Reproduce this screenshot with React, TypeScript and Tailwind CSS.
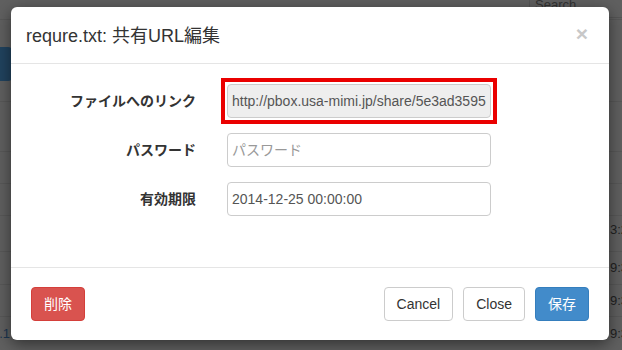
import { useState } from 'react'

const font = '"Liberation Sans", "Noto Sans CJK JP", Arial, sans-serif'

// Dimmed page that sits behind the modal
function BackdropPage() {
  return (
    <div className="flex h-full w-full flex-col bg-[#606060] text-[13px] text-[#222]">
      <div className="flex h-[20px] justify-end border-b border-[#585858]">
        <div className="mr-[-4px] mt-[-6px] h-[24px] w-[97px] rounded-[3px] border border-[#555] pl-[5px] text-[#333]">
          Search
        </div>
      </div>
      <div className="flex h-[82px] items-start border-b border-[#585858] pt-[27px]">
        <div className="h-[34px] w-[12px] rounded-r-[4px] bg-[#21435f]" />
      </div>
      <div className="h-[50px] border-b border-[#585858]" />
      <div className="h-[32px] border-b border-[#585858]" />
      <div className="h-[32px] border-b border-[#585858]" />
      <div className="flex h-[36px] items-start justify-end border-b border-[#585858] pt-[4px]">
        <span className="mr-[-6px]">3:2</span>
      </div>
      <div className="flex h-[33px] items-center justify-end border-b border-[#585858]">
        <span className="mr-[-6px]">9:3</span>
      </div>
      <div className="flex h-[32px] items-center justify-end border-b border-[#585858]">
        <span className="mr-[-6px]">9:3</span>
      </div>
      <div className="flex h-[33px] items-center justify-between">
        <span className="ml-[-8px] text-[#1b3550]">0.1</span>
        <span className="mr-[-6px]">9:3</span>
      </div>
      <div className="flex flex-1">
        <div className="w-[180px] border-r border-[#585858]" />
        <div className="w-[158px] border-r border-[#585858]" />
        <div className="w-[85px] border-r border-[#585858]" />
      </div>
    </div>
  )
}

function FieldRow({ label, children }: { label: string; children: React.ReactNode }) {
  return (
    <div className="flex items-center">
      <label className="w-[216px] pr-[31px] text-right text-[14px] font-bold text-[#333]">{label}</label>
      {children}
    </div>
  )
}

export default function App() {
  const [password, setPassword] = useState('')
  const [expires, setExpires] = useState('2014-12-25 00:00:00')

  const inputClass =
    'h-[34px] w-[264px] rounded-[4px] border border-[#ccc] px-[4px] text-[14px] text-[#555] outline-none placeholder:text-[#999]'

  return (
    <div className="relative h-[350px] w-[622px] overflow-hidden" style={{ fontFamily: font }}>
      <BackdropPage />

      {/* Modal */}
      <div className="absolute inset-0">
        <div className="ml-[11px] mt-[7px] w-[598px] rounded-[6px] bg-white shadow-[0_4px_16px_rgba(0,0,0,0.5)]">
          {/* Header */}
          <div className="flex h-[57px] items-center justify-between border-b border-[#e5e5e5] pl-[15px] pr-[21px]">
            <h4 className="mt-[2px] text-[18px] text-[#333]">requre.txt: 共有URL編集</h4>
            <button className="mt-[-4px] text-[21px] font-bold leading-none text-[#c8c8c8]">×</button>
          </div>

          {/* Body */}
          <div className="flex h-[203px] flex-col gap-[15px] pt-[20px]">
            <FieldRow label="ファイルへのリンク">
              <div className="m-[-6px] border-4 border-[#ea0000] p-[2px]">
                <input
                  readOnly
                  value="http://pbox.usa-mimi.jp/share/5e3ad359567a1b2c"
                  className={inputClass + ' block bg-[#eee]'}
                />
              </div>
            </FieldRow>
            <FieldRow label="パスワード">
              <input
                type="text"
                value={password}
                onChange={(e) => setPassword(e.target.value)}
                placeholder="パスワード"
                className={inputClass}
              />
            </FieldRow>
            <FieldRow label="有効期限">
              <input
                type="text"
                value={expires}
                onChange={(e) => setExpires(e.target.value)}
                className={inputClass}
              />
            </FieldRow>
          </div>

          {/* Footer */}
          <div className="flex h-[73px] items-center justify-between border-t border-[#e5e5e5] px-[20px]">
            <button className="h-[34px] rounded-[4px] border border-[#d43f3a] bg-[#d9534f] px-[12px] text-[14px] text-white">
              削除
            </button>
            <div className="flex gap-[10px]">
              <button className="h-[34px] rounded-[4px] border border-[#ccc] bg-white px-[12px] text-[14px] text-[#333]">
                Cancel
              </button>
              <button className="h-[34px] rounded-[4px] border border-[#ccc] bg-white px-[12px] text-[14px] text-[#333]">
                Close
              </button>
              <button className="h-[34px] rounded-[4px] border border-[#357ebd] bg-[#428bca] px-[12px] text-[14px] text-white">
                保存
              </button>
            </div>
          </div>
        </div>
      </div>
    </div>
  )
}
